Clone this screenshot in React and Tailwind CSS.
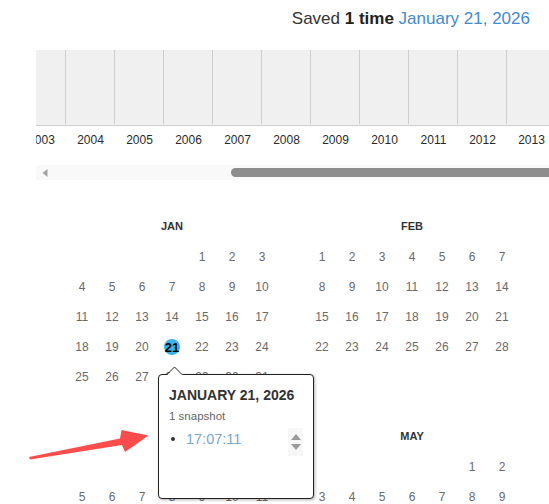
import React from "react";

const years = [2003, 2004, 2005, 2006, 2007, 2008, 2009, 2010, 2011, 2012, 2013, 2014];

const months = [
  { name: "JAN", start: 4, days: 31 },
  { name: "FEB", start: 0, days: 28 },
  { name: "MAR", start: 0, days: 31 },
  { name: "APR", start: 3, days: 30 },
  { name: "MAY", start: 5, days: 31 },
  { name: "JUN", start: 1, days: 30 },
];

function Month({ m }) {
  const cells = [];
  for (let i = 0; i < 42; i++) {
    const d = i - m.start + 1;
    cells.push(d >= 1 && d <= m.days ? d : null);
  }
  return (
    <div className="w-[210px]">
      <div className="h-[30px] leading-[28px] text-center text-[11px] font-bold text-[#333]">{m.name}</div>
      <div className="grid grid-cols-7">
        {cells.map((d, i) => {
          const hl = m.name === "JAN" && d === 21;
          return (
            <div key={i} className="h-[30px] flex items-center justify-center">
              {d !== null &&
                (hl ? (
                  <span className="w-[16px] h-[16px] rounded-full bg-[#3bb3e9] flex items-center justify-center text-[13px] font-bold text-black leading-none">
                    {d}
                  </span>
                ) : (
                  <span className="text-[12px] text-[#6a6a6a] leading-[14px]">{d}</span>
                ))}
            </div>
          );
        })}
      </div>
    </div>
  );
}

export default function App() {
  return (
    <div className="relative w-[549px] h-[504px] overflow-hidden bg-white font-['Liberation_Sans',Arial,sans-serif]">
      {/* Header */}
      <div className="h-[50px] pt-[9px] pr-[19px] text-right text-[17px] leading-[20px] text-[#333]">
        Saved <span className="font-bold text-[#222]">1 time</span>{" "}
        <span className="text-[#3f8bd0]">January 21, 2026</span>
      </div>

      {/* Timeline */}
      <div className="ml-[36px] overflow-hidden">
        <div className="h-[76px] bg-[#f0f0f0] border-b border-[#cfcfcf]">
          <div className="flex h-[74px] -ml-[19px]">
            {years.map((y) => (
              <div key={y} className="w-[49px] shrink-0 h-full border-r border-[#cdcdcd]" />
            ))}
          </div>
        </div>
        <div className="flex -ml-[19px] pt-[7px]">
          {years.map((y) => (
            <div key={y} className="w-[49px] shrink-0 text-center text-[12px] leading-[14px] text-[#2a2a2a]">
              {y}
            </div>
          ))}
        </div>
        {/* Scrollbar */}
        <div className="mt-[18px] h-[15px] bg-[#f9f9f9] flex items-center">
          <svg width="6" height="8" viewBox="0 0 6 8" className="ml-[6px] shrink-0">
            <polygon points="5.5,0 5.5,8 0.5,4" fill="#a3a3a3" />
          </svg>
          <div className="ml-[183px] flex-1 h-[9px] rounded-l-full bg-[#8d8d8d]" />
        </div>
      </div>

      {/* Calendars */}
      <div className="mt-[32px] pl-[67px] grid grid-cols-[210px_210px_210px] gap-x-[30px]">
        {months.map((m) => (
          <Month key={m.name} m={m} />
        ))}
      </div>

      {/* Popup */}
      <div className="absolute left-[158px] top-[374px] w-[156px] h-[125px] bg-white border border-[#222] rounded-[4px] shadow-[1px_1px_3px_rgba(0,0,0,0.3)]">
        <svg width="18" height="10" viewBox="0 0 18 10" className="absolute left-[7px] -top-[9px]">
          <polygon points="0,10 9,1 18,10" fill="white" />
          <polyline points="0.5,9 8.5,1 16.5,9" fill="none" stroke="#222" strokeWidth="1" />
        </svg>
        <div className="pl-[10px] pt-[12px]">
          <div className="text-[14px] leading-[16px] font-bold text-[#333]">JANUARY 21, 2026</div>
          <div className="mt-[6px] text-[11.5px] leading-[14px] text-[#666]">1 snapshot</div>
          <div className="mt-[7px] flex items-center h-[18px]">
            <span className="ml-[2px] w-[4px] h-[4px] rounded-full bg-[#333] shrink-0" />
            <span className="ml-[11px] text-[14.5px] leading-[18px] text-[#78a6d6]">17:07:11</span>
          </div>
        </div>
        <div className="absolute right-[10px] top-[53px] w-[15px] h-[28px] bg-[#f7f7f7] flex flex-col items-center justify-center gap-[4px]">
          <svg width="10" height="6" viewBox="0 0 10 6">
            <polygon points="5,0 10,6 0,6" fill="#9a9a9a" />
          </svg>
          <svg width="10" height="6" viewBox="0 0 10 6">
            <polygon points="0,0 10,0 5,6" fill="#9a9a9a" />
          </svg>
        </div>
      </div>

      {/* Red arrow annotation */}
      <svg width="130" height="40" viewBox="25 425 130 40" className="absolute left-[25px] top-[425px]">
        <polygon
          points="29,457 120,438.5 121.5,430 148.5,435.5 125,452 122,445 30,459.5"
          fill="#fd4c4c"
        />
      </svg>
    </div>
  );
}
